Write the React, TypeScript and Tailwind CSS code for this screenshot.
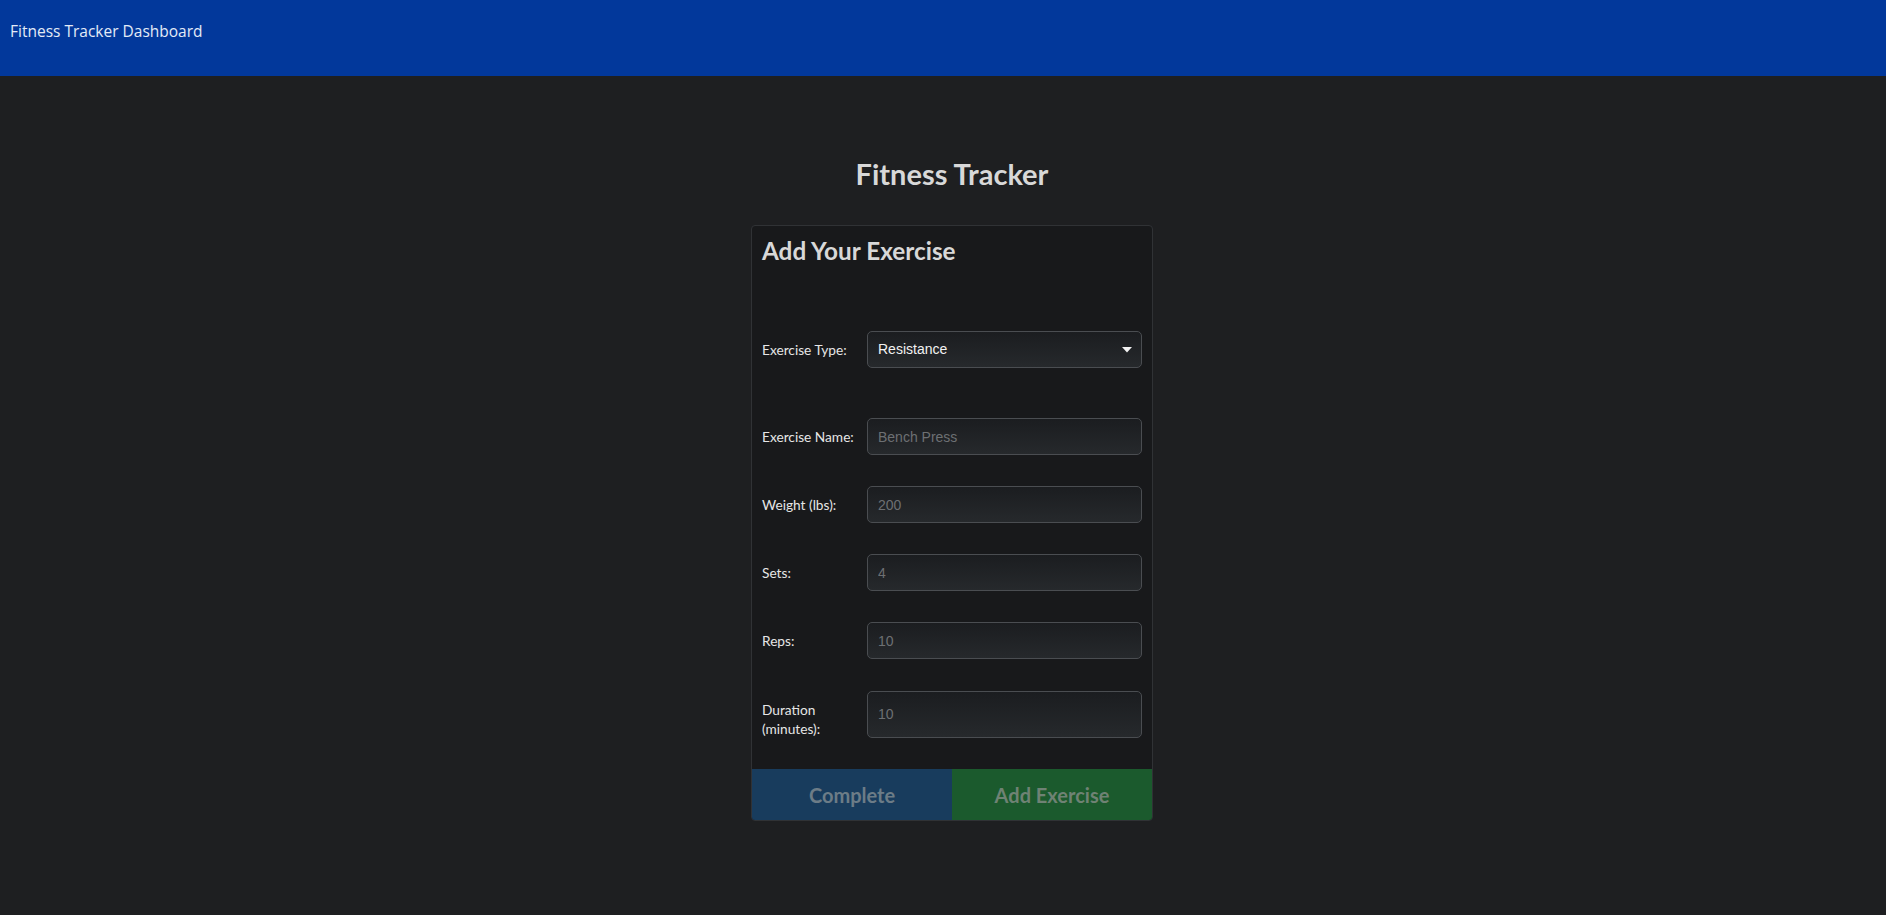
import React from "react";

const inputCls =
  "w-full rounded-[5px] border border-[#4a4d51] bg-gradient-to-b from-[#1b1d20] to-[#26292c] px-[10px] text-[14px] text-[#eeeeee] placeholder:text-[#6d7073] outline-none";

function Row({
  label,
  placeholder,
  className,
  tall,
}: {
  label: React.ReactNode;
  placeholder: string;
  className?: string;
  tall?: boolean;
}) {
  return (
    <div className={"flex items-center " + (className ?? "")}>
      <label
        className={
          "w-[105px] shrink-0 text-[13.7px] leading-[19px] text-[#e6e6e6]" +
          (tall ? " pt-[10px]" : "")
        }
        style={{ fontFamily: "Lato, 'Open Sans', sans-serif" }}
      >
        {label}
      </label>
      <input
        className={inputCls + (tall ? " h-[47px]" : " h-[37px]")}
        placeholder={placeholder}
        style={{ fontFamily: "'Liberation Sans', Arial, sans-serif" }}
      />
    </div>
  );
}

export default function App() {
  return (
    <div
      className="min-h-[915px] w-full bg-[#1e1f21]"
      style={{ fontFamily: "Lato, 'Open Sans', sans-serif" }}
    >
      <header className="h-[76px] bg-[#02389b] px-[10px] pt-[19px]">
        <span
          className="text-[15.5px] leading-[24px] text-[#e3ebf7]"
          style={{ fontFamily: "'Open Sans', 'Noto Sans', sans-serif" }}
        >
          Fitness Tracker Dashboard
        </span>
      </header>

      <div className="flex flex-col items-center pl-[18px] pt-[80px]">
        <h1 className="text-[29px] font-bold leading-[36px] text-[#d8d8d8]">
          Fitness Tracker
        </h1>

        <div className="mt-[33px] w-[402px] overflow-hidden rounded-[4px] border border-[#303235] bg-[#18191b]">
          <div className="px-[10px] pt-[10px] pb-[31px]">
            <h2 className="text-[24.3px] font-bold leading-[29px] text-[#d8d8d8]">
              Add Your Exercise
            </h2>

            <div className="mt-[66px] flex items-center">
              <label className="w-[105px] shrink-0 text-[13.7px] leading-[19px] text-[#e6e6e6]">
                Exercise Type:
              </label>
              <div className="relative w-full">
                <select
                  className="h-[37px] w-full appearance-none rounded-[5px] border border-[#4a4d51] bg-gradient-to-b from-[#1b1d20] to-[#26292c] px-[10px] text-[14px] text-[#f2f2f2] outline-none"
                  style={{ fontFamily: "'Liberation Sans', Arial, sans-serif" }}
                  defaultValue="Resistance"
                >
                  <option>Resistance</option>
                  <option>Cardio</option>
                </select>
                <svg
                  className="pointer-events-none absolute right-[10px] top-1/2 -translate-y-1/2"
                  width="10"
                  height="6"
                  viewBox="0 0 10 6"
                >
                  <path d="M0 0 L10 0 L5 5.5 Z" fill="#f2f2f2" />
                </svg>
              </div>
            </div>

            <Row className="mt-[50px]" label="Exercise Name:" placeholder="Bench Press" />
            <Row className="mt-[31px]" label="Weight (lbs):" placeholder="200" />
            <Row className="mt-[31px]" label="Sets:" placeholder="4" />
            <Row className="mt-[31px]" label="Reps:" placeholder="10" />
            <Row
              className="mt-[31px]"
              label={
                <>
                  Duration
                  <br />
                  (minutes):
                </>
              }
              placeholder="10"
              tall
            />
          </div>

          <div className="flex h-[51px]">
            <button className="flex-1 bg-[#183c5d] text-[20px] font-bold text-[#6c7c87]">
              Complete
            </button>
            <button className="flex-1 bg-[#1b5a2d] text-[20px] font-bold text-[#6f8274]">
              Add Exercise
            </button>
          </div>
        </div>
      </div>
    </div>
  );
}
